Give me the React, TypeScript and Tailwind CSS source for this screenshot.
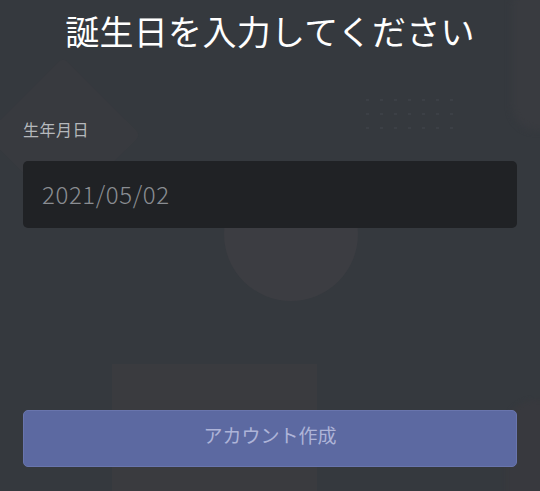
import React from "react";

const jp = { fontFamily: '"Noto Sans CJK JP", "Noto Sans", sans-serif' };

const Dots = () => {
  const rows = [0, 1, 2];
  const cols = [0, 1, 2, 3, 4, 5, 6];
  return (
    <div className="absolute left-[366px] top-[99px] flex flex-col gap-[12px]">
      {rows.map((r) => (
        <div key={r} className="flex gap-[11px]">
          {cols.map((c) => (
            <div key={c} className="w-[3px] h-[2px] bg-[#3c4046]" />
          ))}
        </div>
      ))}
    </div>
  );
};

const Backdrop = () => (
  <div className="absolute inset-0 pointer-events-none">
    {/* diamond */}
    <div className="absolute left-[8px] top-[80px] w-[110px] h-[110px] rotate-45 rounded-[6px] bg-[#383a3f]" />
    {/* circle behind input */}
    <div className="absolute left-[224px] top-[167px] w-[134px] h-[134px] rounded-full bg-[#3c3d42]" />
    {/* square near bottom */}
    <div className="absolute left-[112px] top-[364px] w-[205px] h-[140px] bg-[#3a3b3f]" />
    {/* right edge blobs */}
    <div className="absolute left-[512px] top-[-20px] w-[60px] h-[150px] rounded-[24px] bg-[#393b40] blur-[3px]" />
    <div className="absolute left-[505px] top-[400px] w-[60px] h-[100px] rounded-tl-[30px] bg-[#38393e] blur-[2px]" />
    <Dots />
  </div>
);

export default function App() {
  return (
    <div className="relative w-[540px] h-[491px] overflow-hidden bg-[#35393e]" style={jp}>
      <Backdrop />
      <div className="relative flex flex-col px-[23px] pt-[10px]">
        <h1 className="text-center text-white text-[34px] leading-[42px] font-normal tracking-[0.3px]">
          誕生日を入力してください
        </h1>

        <label className="mt-[67px] text-[16px] leading-[21px] tracking-[0.5px] text-[#b5b8bc]">生年月日</label>

        <div className="mt-[21px] h-[67px] rounded-[5px] bg-[#202225] flex items-center px-[19px]">
          <span className="text-[24px] font-light tracking-[0.6px] text-[#8a8d92] pb-[2px]">2021/05/02</span>
        </div>

        <button className="mt-[182px] h-[57px] rounded-[5px] bg-[#5c69a1] border border-[#6975ad] pb-[6px] text-[19px] text-[#aeb4d8] flex items-center justify-center">
          アカウント作成
        </button>
      </div>
    </div>
  );
}
